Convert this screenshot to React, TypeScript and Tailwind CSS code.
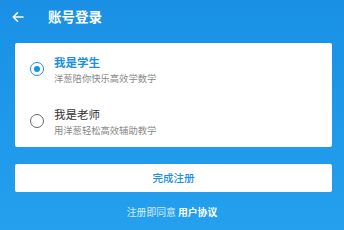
import { useState } from "react";

type Role = "student" | "teacher";

const ROLES: { id: Role; title: string; desc: string }[] = [
  { id: "student", title: "我是学生", desc: "洋葱陪你快乐高效学数学" },
  { id: "teacher", title: "我是老师", desc: "用洋葱轻松高效辅助教学" },
];

function Radio({ checked }: { checked: boolean }) {
  return (
    <span
      className={`flex h-[14px] w-[14px] shrink-0 items-center justify-center rounded-full border-[1.5px] ${
        checked ? "border-[#1a8fe3]" : "border-[#666]"
      }`}
    >
      {checked && <span className="h-[6px] w-[6px] rounded-full bg-[#1a8fe3]" />}
    </span>
  );
}

export default function App() {
  const [role, setRole] = useState<Role>("student");

  return (
    <div
      className="flex h-[230px] w-[344px] flex-col bg-gradient-to-b from-[#1990e4] to-[#24a0ee]"
      style={{ fontFamily: '"Noto Sans CJK SC", "Noto Sans", sans-serif' }}
    >
      <header className="flex h-[34px] items-center">
        <button className="ml-[12px] flex h-[12px] w-[12px] items-center justify-center text-white">
          <svg width="12" height="12" viewBox="0 0 12 12" fill="none" stroke="currentColor" strokeWidth="1.6" strokeLinecap="round" strokeLinejoin="round">
            <path d="M11 6H1.5M5.5 1.8L1.3 6l4.2 4.2" />
          </svg>
        </button>
        <h1 className="ml-[24px] text-[13.5px] font-bold leading-none text-white">账号登录</h1>
      </header>

      <div className="ml-[15px] mr-[12px] mt-[9px] flex h-[104px] flex-col rounded-[2px] bg-white">
        {ROLES.map((r) => {
          const checked = role === r.id;
          return (
            <button
              key={r.id}
              onClick={() => setRole(r.id)}
              className="flex flex-1 items-center pl-[15px] text-left"
            >
              <Radio checked={checked} />
              <span className="ml-[10px] flex flex-col">
                <span
                  className={`text-[11.5px] leading-[14px] ${
                    checked ? "font-bold text-[#1a8fe3]" : "text-[#333]"
                  }`}
                >
                  {r.title}
                </span>
                <span className="mt-[3px] text-[9.3px] leading-[12px] text-[#888]">{r.desc}</span>
              </span>
            </button>
          );
        })}
      </div>

      <button className="ml-[15px] mr-[12px] mt-[17px] flex h-[28px] items-center justify-center rounded-[2px] bg-white text-[10.5px] font-medium text-[#1a8fe3]">
        完成注册
      </button>

      <p className="mt-[16px] text-center text-[9.8px] leading-none text-white/80">
        注册即同意 <span className="font-bold text-white">用户协议</span>
      </p>
    </div>
  );
}
